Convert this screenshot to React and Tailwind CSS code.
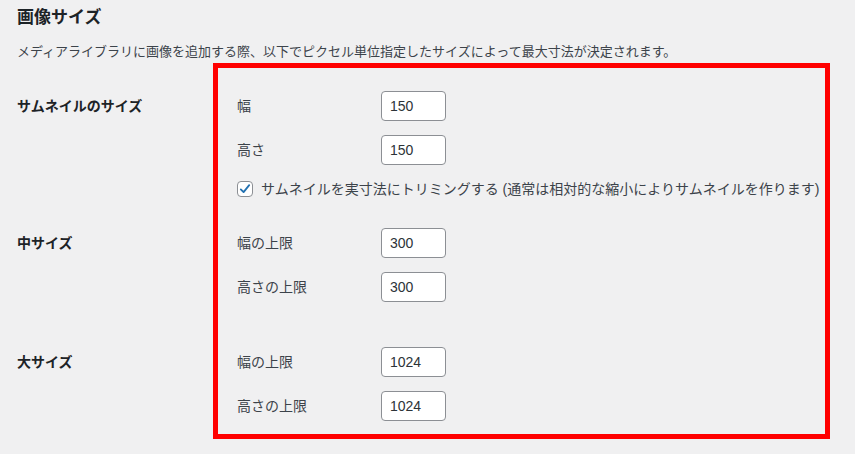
import React from 'react';

const font = { fontFamily: '"Liberation Sans", "Noto Sans CJK JP", sans-serif' };

// one "label + number input" line inside a size row
const SizeField = ({ label, value }) => (
  <div className="flex items-center h-[30px]">
    <span className="w-[144px] text-[14px] text-[#3c434a]">{label}</span>
    <input
      type="text"
      defaultValue={value}
      className="w-[65px] h-[30px] px-[8px] text-[14px] text-[#2c3338] bg-white border border-[#8c8f94] rounded-[4px] outline-none"
    />
  </div>
);

const SizeRow = ({ title, children, className }) => (
  <div className={`flex ${className || ''}`}>
    <div className="w-[220px] h-[30px] leading-[30px] text-[14px] font-bold text-[#1d2327]">{title}</div>
    <div className="flex flex-col gap-[14px]">{children}</div>
  </div>
);

const App = () => {
  return (
    <div className="relative w-[855px] h-[454px] bg-[#f0f0f1] overflow-hidden pl-[17px] pt-[6px]" style={font}>
      <h2 className="text-[17px] leading-[24px] font-bold text-[#1d2327]">画像サイズ</h2>
      <p className="mt-[12px] text-[13px] leading-[20px] text-[#3c434a]">
        メディアライブラリに画像を追加する際、以下でピクセル単位指定したサイズによって最大寸法が決定されます。
      </p>

      <SizeRow title="サムネイルのサイズ" className="mt-[29px]">
        <SizeField label="幅" value="150" />
        <SizeField label="高さ" value="150" />
        <label className="flex items-center gap-[8px] h-[16px] mt-[2px] text-[14px] text-[#3c434a]">
          <span className="w-[16px] h-[16px] bg-white border border-[#8c8f94] rounded-[4px] flex items-center justify-center">
            <svg width="14" height="14" viewBox="0 0 20 20">
              <path d="M4 10.5 L8 14.5 L16 4.5" fill="none" stroke="#2271b1" strokeWidth="2.6" strokeLinecap="round" strokeLinejoin="round" />
            </svg>
          </span>
          サムネイルを実寸法にトリミングする (通常は相対的な縮小によりサムネイルを作ります)
        </label>
      </SizeRow>

      <SizeRow title="中サイズ" className="mt-[31px]">
        <SizeField label="幅の上限" value="300" />
        <SizeField label="高さの上限" value="300" />
      </SizeRow>

      <SizeRow title="大サイズ" className="mt-[45px]">
        <SizeField label="幅の上限" value="1024" />
        <SizeField label="高さの上限" value="1024" />
      </SizeRow>

      {/* red annotation frame over the settings */}
      <div className="absolute left-[213px] top-[63px] w-[617px] h-[376px] border-[5px] border-[#ff0000] pointer-events-none" />
    </div>
  );
};

export default App;
